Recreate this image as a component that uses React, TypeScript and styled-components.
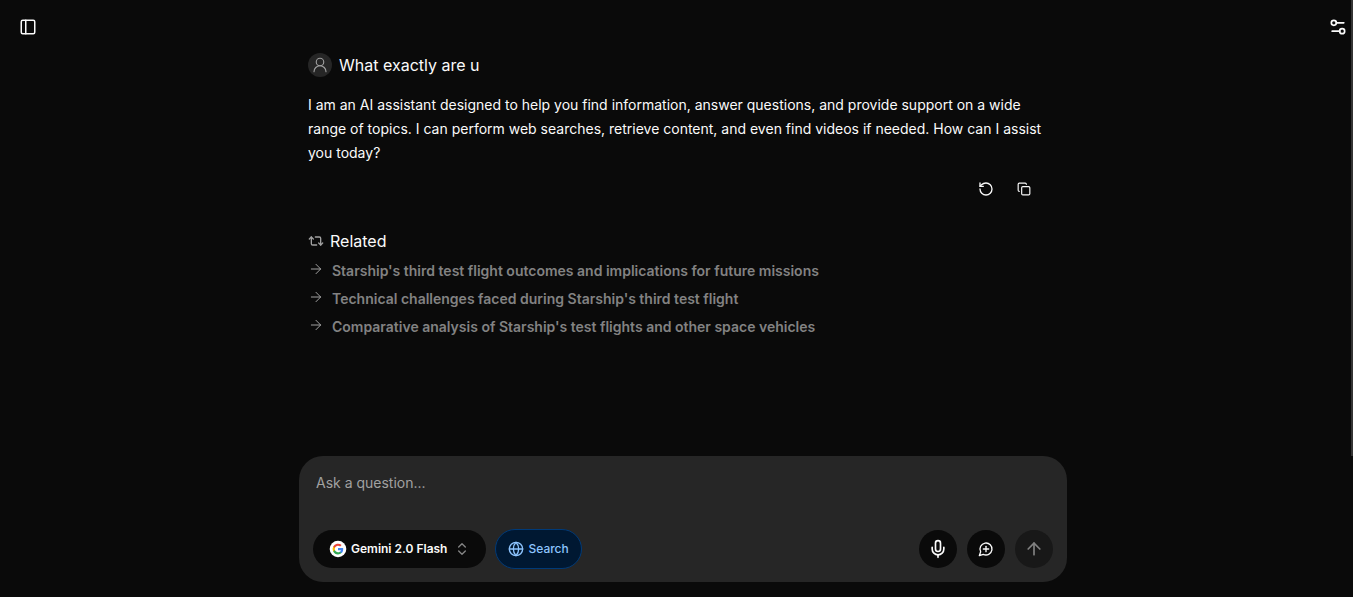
import React, { useState } from "react";
import styled, { createGlobalStyle } from "styled-components";
import {
  ArrowRight,
  ArrowUp,
  ChevronsUpDown,
  Copy,
  Globe,
  Mic,
  PanelLeft,
  Repeat2,
  RotateCcw,
  Settings2,
  UserRound,
} from "lucide-react";

const GlobalStyle = createGlobalStyle`
  *, *::before, *::after { box-sizing: border-box; }
  body {
    margin: 0;
    background: #0a0a0a;
    color: #fafafa;
    font-family: Inter, "Liberation Sans", sans-serif;
    font-size: 14px;
    line-height: 24px;
  }
  h2, h3, p, ul { margin: 0; padding: 0; }
  button { font: inherit; color: inherit; cursor: pointer; }
`;

const Page = styled.div`
  display: grid;
  grid-template-columns: 56px minmax(0, 1fr) 43px;
  min-height: 100vh;
`;

const Rail = styled.aside<{ $side: "left" | "right" }>`
  display: flex;
  align-items: flex-start;
  justify-content: ${(p) => (p.$side === "left" ? "center" : "flex-end")};
  padding: 15px ${(p) => (p.$side === "left" ? "0" : "3px")} 0 0;
`;

const IconButton = styled.button`
  display: flex;
  align-items: center;
  justify-content: center;
  width: 24px;
  height: 24px;
  padding: 0;
  border: 0;
  background: none;
`;

const ScrollThumb = styled.div`
  position: fixed;
  top: 0;
  right: 0;
  width: 2px;
  height: 76.4vh;
  background: #343434;
`;

const Column = styled.main`
  display: flex;
  flex-direction: column;
  width: 100%;
  max-width: 768px;
  margin: 0 auto;
  padding: 53px 0 15px;
`;

const Thread = styled.div`
  display: flex;
  flex: 1;
  flex-direction: column;
  padding: 0 8px 40px 9px;
`;

const Question = styled.div`
  display: flex;
  align-items: center;
  gap: 7px;
`;

const Avatar = styled.span`
  display: flex;
  align-items: center;
  justify-content: center;
  width: 24px;
  height: 24px;
  border-radius: 50%;
  background: #262626;
  color: #a1a1a1;
`;

const Heading = styled.h2`
  font-size: 16px;
  font-weight: 400;
`;

const Answer = styled.p`
  margin-top: 16px;
`;

const Actions = styled.div`
  display: flex;
  justify-content: flex-end;
  gap: 14px;
  margin-top: 12px;
  padding-right: 23px;
`;

const Related = styled.section`
  margin-top: 28px;
`;

const RelatedTitle = styled.div`
  display: flex;
  align-items: center;
  gap: 6px;
  color: #a1a1a1;

  h2 { color: #fafafa; }
`;

const RelatedList = styled.ul`
  display: flex;
  flex-direction: column;
  gap: 4px;
  margin-top: 6px;
  list-style: none;
`;

const RelatedItem = styled.li`
  display: flex;
  gap: 8px;
  color: #a1a1a1;

  svg { flex: none; margin-top: 2px; }
`;

const RelatedLink = styled.a`
  color: #828282;
  font-weight: 600;
  text-decoration: none;
`;

const Composer = styled.form`
  display: flex;
  flex-direction: column;
  padding: 15px 14px 13px;
  border-radius: 24px;
  background: #262626;
`;

const Prompt = styled.textarea`
  height: 58px;
  padding: 0 3px;
  border: 0;
  outline: 0;
  background: none;
  color: inherit;
  font: inherit;
  resize: none;

  &::placeholder { color: #a1a1a1; opacity: 1; }
`;

const Toolbar = styled.div`
  display: flex;
  align-items: center;
  justify-content: space-between;
`;

const Group = styled.div<{ $gap: number }>`
  display: flex;
  align-items: center;
  gap: ${(p) => p.$gap}px;
`;

const Pill = styled.button<{ $active?: boolean }>`
  display: flex;
  align-items: center;
  gap: 4px;
  height: ${(p) => (p.$active ? "40px" : "38px")};
  padding: ${(p) => (p.$active ? "0 12px" : "0 16px")};
  border: ${(p) => (p.$active ? "1px solid #003a78" : "0")};
  border-radius: 20px;
  background: ${(p) => (p.$active ? "#001832" : "#0a0a0a")};
  color: ${(p) => (p.$active ? "#8ec5ff" : "#fafafa")};
  font-size: 12px;
  font-weight: ${(p) => (p.$active ? 500 : 600)};
`;

const PillChevron = styled(ChevronsUpDown)`
  margin-left: 3px;
  color: #858585;
`;

const RoundButton = styled.button`
  display: flex;
  align-items: center;
  justify-content: center;
  width: 38px;
  height: 38px;
  padding: 0;
  border: 0;
  border-radius: 50%;
  background: #0a0a0a;

  &:disabled { background: #181818; color: #828282; cursor: default; }
`;

const GoogleLogo = () => (
  <svg width="18" height="18" viewBox="0 0 18 18" aria-hidden="true">
    <circle cx="9" cy="9" r="8.3" fill="#fff" />
    <g transform="translate(3.6 3.6) scale(0.45)">
      <path fill="#4285F4" d="M23.5 12.3c0-.8-.1-1.6-.2-2.3H12v4.5h6.500a5.500 5.500 0 0 1-2.400 3.600v3h3.900c2.200-2.100 3.500-5.100 3.500-8.800z" />
      <path fill="#34A853" d="M12 24c3.200 0 6-1.100 7.900-2.900l-3.900-3c-1 .7-2.400 1.200-4 1.200-3.100 0-5.800-2.100-6.700-4.900h-4v3.100A12 12 0 0 0 12 24z" />
      <path fill="#FBBC05" d="M5.300 14.300a7.200 7.200 0 0 1 0-4.600V6.600h-4a12 12 0 0 0 0 10.800l4-3.100z" />
      <path fill="#EA4335" d="M12 4.800c1.800 0 3.300.6 4.600 1.800L20 3.200A12 12 0 0 0 1.300 6.600l4 3.100C6.200 6.900 8.900 4.800 12 4.800z" />
    </g>
  </svg>
);

const NewChatIcon = () => (
  <svg
    width="16"
    height="16"
    viewBox="0 0 24 24"
    fill="none"
    stroke="currentColor"
    strokeWidth="2"
    strokeLinecap="round"
    strokeLinejoin="round"
    aria-hidden="true"
  >
    <path d="M7.900 20A9 9 0 1 0 4 16.100L2 22Z" />
    <path d="M8 12h8" />
    <path d="M12 8v8" />
  </svg>
);

const relatedQuestions = [
  "Starship's third test flight outcomes and implications for future missions",
  "Technical challenges faced during Starship's third test flight",
  "Comparative analysis of Starship's test flights and other space vehicles",
];

export default function App() {
  const [prompt, setPrompt] = useState("");

  return (
    <>
      <GlobalStyle />
      <Page>
        <Rail $side="left">
          <IconButton aria-label="Toggle sidebar">
            <PanelLeft size={18} />
          </IconButton>
        </Rail>

        <Column>
          <Thread>
            <Question>
              <Avatar>
                <UserRound size={18} strokeWidth={1.5} />
              </Avatar>
              <Heading>What exactly are u</Heading>
            </Question>
            <Answer>
              I am an AI assistant designed to help you find information, answer
              questions, and provide support on a wide range of topics. I can
              perform web searches, retrieve content, and even find videos if
              needed. How can I assist you today?
            </Answer>
            <Actions>
              <IconButton aria-label="Retry">
                <RotateCcw size={16} />
              </IconButton>
              <IconButton aria-label="Copy">
                <Copy size={14} />
              </IconButton>
            </Actions>

            <Related>
              <RelatedTitle>
                <Repeat2 size={16} />
                <Heading>Related</Heading>
              </RelatedTitle>
              <RelatedList>
                {relatedQuestions.map((question) => (
                  <RelatedItem key={question}>
                    <ArrowRight size={16} strokeWidth={1.5} />
                    <RelatedLink href="#">{question}</RelatedLink>
                  </RelatedItem>
                ))}
              </RelatedList>
            </Related>
          </Thread>

          <Composer onSubmit={(e) => e.preventDefault()}>
            <Prompt
              aria-label="Ask a question"
              placeholder="Ask a question..."
              value={prompt}
              onChange={(e) => setPrompt(e.target.value)}
            />
            <Toolbar>
              <Group $gap={9}>
                <Pill type="button" aria-haspopup="listbox">
                  <GoogleLogo />
                  Gemini 2.0 Flash
                  <PillChevron size={16} />
                </Pill>
                <Pill type="button" $active aria-pressed="true">
                  <Globe size={16} />
                  Search
                </Pill>
              </Group>
              <Group $gap={10}>
                <RoundButton type="button" aria-label="Dictate">
                  <Mic size={20} />
                </RoundButton>
                <RoundButton type="button" aria-label="New chat">
                  <NewChatIcon />
                </RoundButton>
                <RoundButton type="submit" aria-label="Send" disabled={!prompt}>
                  <ArrowUp size={20} />
                </RoundButton>
              </Group>
            </Toolbar>
          </Composer>
        </Column>

        <Rail $side="right">
          <IconButton aria-label="Settings">
            <Settings2 size={20} />
          </IconButton>
        </Rail>
      </Page>
      <ScrollThumb />
    </>
  );
}
